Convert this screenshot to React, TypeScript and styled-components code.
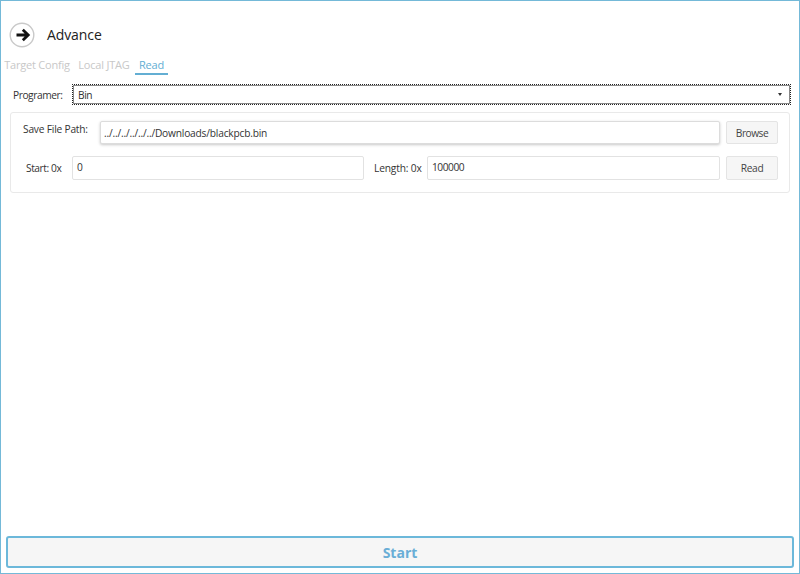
import React from "react";
import styled, { createGlobalStyle } from "styled-components";

const Global = createGlobalStyle`
  html, body { margin: 0; padding: 0; background: #fff; }
  * { box-sizing: border-box; }
  body { font-family: "Open Sans", "Noto Sans", sans-serif; color: #333; }
`;

const Window = styled.div`
  width: 800px;
  height: 574px;
  border: 1px solid #74b9d8;
  display: flex;
  flex-direction: column;
  overflow: hidden;
  background: #fff;
`;

const Header = styled.header`
  display: flex;
  align-items: center;
  height: 26px;
  margin-top: 21px;
  padding-left: 8px;
  gap: 12px;
`;

const Title = styled.h1`
  margin: 0 0 2px;
  font-size: 14px;
  font-weight: 400;
  color: #222;
  letter-spacing: -0.1px;
`;

const Tabs = styled.nav`
  display: flex;
  margin-top: 9px;
  height: 21px;
`;

const Tab = styled.div<{ $active?: boolean; $w: number }>`
  width: ${(p) => p.$w}px;
  text-align: center;
  font-size: 11px;
  line-height: 15px;
  letter-spacing: -0.2px;
  white-space: nowrap;
  color: ${(p) => (p.$active ? "#63aed3" : "#c8c8c8")};
  border-bottom: 2px solid ${(p) => (p.$active ? "#63aed3" : "transparent")};
  height: 18px;
`;

const ProgramRow = styled.div`
  display: flex;
  align-items: center;
  margin-top: 6px;
  padding-left: 12px;
  padding-right: 8px;
  height: 21px;
`;

const Label = styled.label<{ $w: number; $ml?: number; $ls: number; $raise?: number }>`
  width: ${(p) => p.$w}px;
  margin-left: ${(p) => p.$ml ?? 0}px;
  margin-bottom: ${(p) => p.$raise ?? 0}px;
  flex: none;
  font-size: 10.2px;
  letter-spacing: ${(p) => p.$ls}px;
  white-space: nowrap;
  color: #333;
`;

const Select = styled.div`
  flex: 1;
  height: 21px;
  border: 1px dotted #222;
  box-shadow: inset 0 0 0 1px #888;
  display: flex;
  align-items: center;
  justify-content: space-between;
  padding: 0 8px 0 5px;
  font-size: 10.2px;
  letter-spacing: -0.4px;
  color: #333;
`;

const Caret = styled.span`
  width: 0;
  height: 0;
  border-left: 2.5px solid transparent;
  border-right: 2.5px solid transparent;
  border-top: 3px solid #333;
`;

const Panel = styled.section`
  margin: 7px 9px 0 9px;
  height: 81px;
  border: 1px solid #e9e9e9;
  border-radius: 3px;
  padding: 8px 11px 0 12px;
  display: flex;
  flex-direction: column;
  gap: 12px;
`;

const Row = styled.div<{ $h: number }>`
  display: flex;
  align-items: center;
  height: ${(p) => p.$h}px;
`;

const Field = styled.div<{ $w?: number; $focus?: boolean; $ls: number }>`
  ${(p) => (p.$w ? `width: ${p.$w}px; flex: none;` : "flex: 1;")}
  align-self: stretch;
  border: 1px solid ${(p) => (p.$focus ? "#dcdcdc" : "#e2e2e2")};
  border-radius: 2px;
  padding: ${(p) => (p.$focus ? "0 3px" : "3px 4px 0")};
  font-size: 10.2px;
  letter-spacing: ${(p) => p.$ls}px;
  color: #333;
  background: #fff;
  display: flex;
  align-items: ${(p) => (p.$focus ? "center" : "flex-start")};
  box-shadow: ${(p) => (p.$focus ? "0 1px 3px rgba(0,0,0,0.22)" : "none")};
`;

const Button = styled.button<{ $h: number; $ls: number }>`
  width: 52px;
  height: ${(p) => p.$h}px;
  margin-left: 6px;
  flex: none;
  border: 1px solid #e4e4e4;
  border-radius: 2px;
  background: #f6f6f6;
  color: #444;
  font: inherit;
  font-size: 10.2px;
  letter-spacing: ${(p) => p.$ls}px;
  padding: 0;
`;

const Spacer = styled.div`
  flex: 1;
`;

const StartButton = styled.button`
  margin: 0 5px 5px 5px;
  height: 32px;
  flex: none;
  border: 2px solid #6cb8da;
  border-radius: 3px;
  background: #f6f6f6;
  color: #6aaed6;
  font: inherit;
  font-size: 14px;
  font-weight: 700;
  padding: 0;
`;

const ArrowIcon = () => (
  <svg width="26" height="26" viewBox="0 0 26 26" aria-hidden="true">
    <circle cx="13" cy="13" r="11.8" fill="#fff" stroke="#c9c9c9" strokeWidth="1.4" />
    <path d="M7.5 13H19M13.8 7.8 19.2 13l-5.4 5.2" fill="none" stroke="#111" strokeWidth="2.8" />
  </svg>
);

export default function App() {
  return (
    <Window>
      <Global />
      <Header>
        <ArrowIcon />
        <Title>Advance</Title>
      </Header>
      <Tabs>
        <Tab $w={72}>Target Config</Tab>
        <Tab $w={62}>Local JTAG</Tab>
        <Tab $w={33} $active>Read</Tab>
      </Tabs>
      <ProgramRow>
        <Label $w={59} $ls={-0.44}>Programer:</Label>
        <Select>
          Bin
          <Caret />
        </Select>
      </ProgramRow>
      <Panel>
        <Row $h={23}>
          <Label $w={77} $ls={-0.2} $raise={8}>Save File Path:</Label>
          <Field $focus $ls={-0.2}>../../../../../../Downloads/blackpcb.bin</Field>
          <Button $h={23} $ls={-0.5}>Browse</Button>
        </Row>
        <Row $h={24}>
          <Label $w={46} $ml={3} $ls={-0.43}>Start: 0x</Label>
          <Field $w={292} $ls={-0.33}>0</Field>
          <Label $w={53} $ml={10} $ls={-0.15}>Length: 0x</Label>
          <Field $ls={-0.45}>100000</Field>
          <Button $h={24} $ls={-0.3}>Read</Button>
        </Row>
      </Panel>
      <Spacer />
      <StartButton>Start</StartButton>
    </Window>
  );
}
